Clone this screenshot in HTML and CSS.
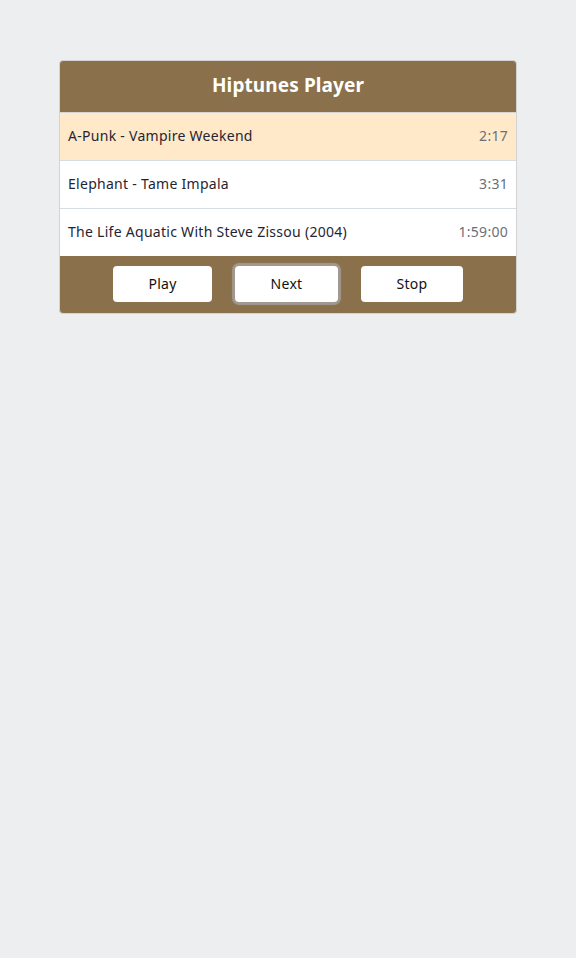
FILE: index.html
```
<!DOCTYPE html>
<html>
<head>
<meta charset="utf-8">
<link rel="stylesheet" href="styles.css">
</head>
<body>
<div class="player">
  <div class="header">Hiptunes Player</div>
  <ul class="tracks">
    <li class="track active"><span class="name">A-Punk - Vampire Weekend</span><span class="time">2:17</span></li>
    <li class="track"><span class="name">Elephant - Tame Impala</span><span class="time">3:31</span></li>
    <li class="track"><span class="name">The Life Aquatic With Steve Zissou (2004)</span><span class="time">1:59:00</span></li>
  </ul>
  <div class="controls">
    <button class="btn">Play</button>
    <button class="btn focused">Next</button>
    <button class="btn">Stop</button>
  </div>
</div>
</body>
</html>
```
FILE: styles.css
```
html, body {
  margin: 0;
  padding: 0;
  background: #eceef0;
}
body {
  font-family: "Noto Sans", "DejaVu Sans", sans-serif;
  padding-top: 60px;
}
.player {
  width: 456px;
  margin: 0 0 0 59px;
  border: 1px solid #d3d3d3;
  border-radius: 4px;
  overflow: hidden;
  background: #8a714c;
}
.header {
  height: 51px;
  line-height: 48px;
  text-align: center;
  color: #fff;
  font-size: 19px;
  font-weight: bold;
  letter-spacing: 0.1px;
  border-bottom: 1px solid #d6d6d6;
}
.tracks {
  list-style: none;
  margin: 0;
  padding: 0;
}
.track {
  display: flex;
  justify-content: space-between;
  align-items: center;
  padding: 0 8px 2px;
  box-sizing: border-box;
  height: 48px;
  background: #fff;
  border-bottom: 1px solid #d5dce4;
  font-size: 14px;
  letter-spacing: 0.28px;
  color: #1f2533;
}
.track:last-child {
  border-bottom: none;
  height: 47px;
}
.track.active {
  background: #ffe9c8;
}
.time {
  color: #6b6f78;
}
.controls {
  display: flex;
  justify-content: center;
  gap: 23px;
  padding: 10px 0 11px;
}
.btn {
  height: 36px;
  padding: 0 0 2px;
  border: none;
  border-radius: 4px;
  background: #fff;
  color: #111;
  font-family: inherit;
  font-size: 14px;
  letter-spacing: 0.28px;
}
.btn:nth-child(1) { width: 99px; }
.btn:nth-child(2) { width: 103px; }
.btn:nth-child(3) { width: 102px; }
.btn.focused {
  box-shadow: 0 0 1px 3px rgba(165, 160, 155, 0.85);
}
```
